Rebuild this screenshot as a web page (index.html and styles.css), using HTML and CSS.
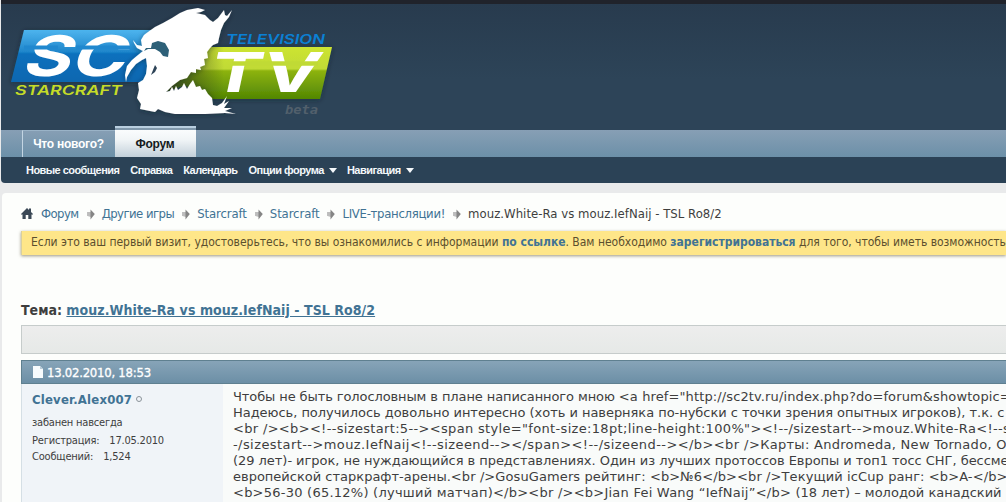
FILE: index.html
```html
<!DOCTYPE html>
<html lang="ru">
<head>
  <meta charset="UTF-8" />
  <title>mouz.White-Ra vs mouz.IefNaij - TSL Ro8/2</title>
  <link rel="stylesheet" href="styles.css">
</head>
<body>

  <!-- Header -->
  <div class="header">
    <a href="#" class="logo">
      <svg width="340" height="124" viewBox="0 0 340 124" role="img" aria-label="SC2TV">
        <defs>
          <linearGradient id="blue" x1="0" y1="0" x2="0" y2="1">
            <stop offset="0" stop-color="#4db4ee" />
            <stop offset="0.42" stop-color="#1f86cb" />
            <stop offset="0.46" stop-color="#0b70bd" />
            <stop offset="1" stop-color="#1067b0" />
          </linearGradient>
          <linearGradient id="green" x1="0" y1="0" x2="0" y2="1">
            <stop offset="0" stop-color="#cde432" />
            <stop offset="0.42" stop-color="#c0da35" />
            <stop offset="0.46" stop-color="#8db310" />
            <stop offset="1" stop-color="#528703" />
          </linearGradient>
          <linearGradient id="shade" x1="0" y1="0" x2="1" y2="0">
            <stop offset="0" stop-color="#27331b" stop-opacity="0.8" />
            <stop offset="1" stop-color="#27331b" stop-opacity="0" />
          </linearGradient>
          <filter id="glow" x="-10%" y="-10%" width="120%" height="125%">
            <feDropShadow dx="0" dy="1" stdDeviation="2.5" flood-color="#101c28" flood-opacity="0.5" />
          </filter>
        </defs>
        <path d="M24 30H160L150 82H11Z" fill="url(#blue)" filter="url(#glow)" />
        <path d="M206 47H332L320 99H204L185 85L165 92L180 74Z" fill="url(#green)" filter="url(#glow)" />
        <path d="M206 47H224V99H204L185 85L165 92L180 74Z" fill="url(#shade)" />

        <text class="logo-sc" transform="translate(20 76) skewX(-20)" textLength="103" lengthAdjust="spacingAndGlyphs">SC</text>
        <path d="M24 47.500H58M76 47.500H130" stroke="#2088cf" stroke-width="4" />
        <text class="logo-tv" transform="translate(207 92) skewX(-12)" textLength="110" lengthAdjust="spacingAndGlyphs">TV</text>
        <path d="M232 63.500H318" stroke="#c0da35" stroke-width="4.500" />
        <text class="logo-name" x="15" y="95" fill="#c5dc28" textLength="107" lengthAdjust="spacingAndGlyphs">STARCRAFT</text>
        <text class="logo-name" x="226" y="44" fill="#0b80d4" textLength="99" lengthAdjust="spacingAndGlyphs">TELEVISION</text>
        <text class="logo-beta" x="285" y="114" textLength="33" lengthAdjust="spacingAndGlyphs">beta</text>

        <!-- hydralisk skull -->
        <path fill="#fff" filter="url(#glow)" d="M148 32L155 27L163 23L172 18L180 13L187 10L198 8L205 10L201 12L196 13L205 15L210 20L213 22L218 18L224 10L225 15L227 16L232 10L229 17L224 23L221 30L219 38L218 43L213 45L210 48L207 52L208 58L204 59L205 65L200 67L201 70L196 69L196 73L191 72L187 78L180 80L172 86L166 92L170 91L172 87L174 91L176 86L178 90L182 87L184 83L187 89L190 84L193 80L196 87L200 86L202 90L205 89L208 94L212 98L213 105L217 106L222 103L227 96L224 104L229 101L224 108L232 108L225 111L236 114L225 113L205 114H175L165 112L158 109L155 112L145 110L140 109L141 104L137 98L139 90L138 83L143 80L146 74L147 66L146 58L142 60L136 64L131 70L127 77L126 82L125 75L127 66L132 60L138 55L143 51L137 48L134 43L133 40L137 45L142 46L141 40L144 35Z" />
        <path fill="#2d6078" d="M151 48L152 43L158 41L165 43L169 50L168 57L163 56L160 52L155 49L148 49L144 51L146 48Z" />
        <path fill="#2d4357" d="M155 65L157 68L155 72L151 75L153 70Z" />
      </svg>
    </a>
  </div>

  <!-- Tabs -->
  <div class="navbar">
    <a href="#" class="tab">Что нового?</a>
    <a href="#" class="tab selected">Форум</a>
  </div>
  <div class="submenu">
    <a href="#">Новые сообщения</a>
    <a href="#">Справка</a>
    <a href="#">Календарь</a>
    <a href="#" class="popup">Опции форума</a>
    <a href="#" class="popup">Навигация</a>
  </div>

  <svg width="0" height="0" class="defs">
    <symbol id="arrow" viewBox="0 0 8 11">
      <path d="M0.500 3H3.500V0.500L7.800 5L3.500 10.500V7.500L0.500 7Z" fill="#858585" />
      <path d="M0.500 3H3.500V7H0.500Z" fill="#bdbdbd" />
    </symbol>
  </svg>

  <div class="body-wrapper">
    <div class="breadcrumb">
      <svg class="home" width="12" height="11" viewBox="0 0 12 11"><path d="M6 0L8 2V0.500H10V4L12 6V6.500H10.500V11H7.300V7H4.700V11H1.500V6.500H0V6Z" fill="#3b4856" /></svg>
      <a href="#" class="tight">Форум</a>
      <svg class="arrow"><use href="#arrow" /></svg>
      <a href="#" class="tight">Другие игры</a>
      <svg class="arrow"><use href="#arrow" /></svg>
      <a href="#">Starcraft</a>
      <svg class="arrow"><use href="#arrow" /></svg>
      <a href="#">Starcraft</a>
      <svg class="arrow"><use href="#arrow" /></svg>
      <a href="#" class="live">LIVE-трансляции!</a>
      <svg class="arrow"><use href="#arrow" /></svg>
      <span class="current">mouz.White-Ra vs mouz.IefNaij - TSL Ro8/2</span>
    </div>

    <div class="notice">Если это ваш первый визит, удостоверьтесь, что вы ознакомились с информации <a href="#">по ссылке</a>. Вам необходимо <a href="#">зарегистрироваться</a> для того, чтобы иметь возможность</div>

    <h1 class="thread-title">Тема: <a href="#">mouz.White-Ra vs mouz.IefNaij - TSL Ro8/2</a></h1>

    <div class="thread-controls"></div>

    <div class="post">
      <div class="post-head">
        <svg width="10" height="12" viewBox="0 0 10 12"><path d="M0 0H7L10 3V12H0Z" fill="#f7fbfd" /><path d="M7 0V3H10" fill="#b8cbd7" /></svg>
        <span>13.02.2010, 18:53</span>
      </div>
      <div class="post-body">
        <div class="user">
          <div class="user-name"><a href="#">Clever.Alex007</a><i class="offline"></i></div>
          <div class="user-title">забанен навсегда</div>
          <div class="user-stat"><span>Регистрация:</span><span>17.05.2010</span></div>
          <div class="user-stat"><span>Сообщений:</span><span>1,524</span></div>
        </div>
        <div class="content">
          <div><span class="ru">Чтобы не быть голословным в плане написанного мною </span><span class="link">&lt;a href="http://sc2tv.ru/index.php?do=forum&amp;showtopic=</span></div>
          <div class="ru-loose">Надеюсь, получилось довольно интересно (хоть и наверняка по-нубски с точки зрения опытных игроков), т.к. с</div>
          <div class="tags">&lt;br /&gt;&lt;b&gt;&lt;!--sizestart:5--&gt;&lt;span style="font-size:18pt;line-height:100%"&gt;&lt;!--/sizestart--&gt;mouz.White-Ra&lt;!--s</div>
          <div><span class="tags-wide">-/sizestart--&gt;mouz.IefNaij&lt;!--sizeend--&gt;&lt;/span&gt;&lt;!--/sizeend--&gt;&lt;/b&gt;&lt;br /&gt;</span><span class="maps">Карты: Andromeda, New Tornado, O</span></div>
          <div class="ru-loose">(29 лет)- игрок, не нуждающийся в представлениях. Один из лучших протоссов Европы и топ1 тосс СНГ, бессме</div>
          <div>европейской старкрафт-арены.<span class="rating">&lt;br /&gt;GosuGamers рейтинг: &lt;b&gt;№6&lt;/b&gt;&lt;br /&gt;Текущий icCup ранг: &lt;b&gt;A-&lt;/b&gt;</span></div>
          <div><span class="record">&lt;b&gt;56-30 (65.12%) (лучший матчап)&lt;/b&gt;&lt;br /&gt;&lt;b&gt;Jian Fei Wang “IefNaij”&lt;/b&gt; </span>(18 лет) – молодой канадский</div>
        </div>
      </div>
    </div>
  </div>

</body>
</html>
```
FILE: styles.css
```css
* {
  margin: 0;
  padding: 0;
  box-sizing: border-box;
}

html, body {
  width: 1006px;
  height: 502px;
  overflow: hidden;
}

body {
  background: #e9eaeb;
  color: #3e3e3e;
  font-family: 'DejaVu Sans Condensed', 'DejaVu Sans', Tahoma, sans-serif;
  font-size: 13px;
  padding-left: 1px;
}

a {
  color: #417394;
  text-decoration: none;
}

/* Header */
.header {
  height: 130px;
  background: linear-gradient(#283b4e, #2d4458 60%);
  border-top: 4px solid #20232b;
}

.logo svg {
  display: block;
  margin: -4px 0 0 -1px;
}

.logo text {
  font-family: Inter, 'DejaVu Sans', sans-serif;
  font-weight: bold;
}

.logo .logo-sc {
  font-size: 56px;
  fill: #fff;
}

.logo .logo-tv {
  font-size: 55px;
  fill: #fff;
}

.logo .logo-name {
  font-size: 13px;
  font-style: italic;
  font-weight: 600;
}

.logo .logo-beta {
  font-family: 'DejaVu Sans Mono', monospace;
  font-size: 13px;
  font-style: italic;
  fill: #52606c;
}

/* Tabs */
.navbar {
  display: flex;
  align-items: flex-end;
  height: 27px;
  padding-left: 21px;
  background: linear-gradient(#879fb5, #6c90a8);
  font-family: 'Liberation Sans', Arial, sans-serif;
  font-weight: bold;
  font-size: 12px;
  letter-spacing: -0.25px;
}

.tab {
  width: 93px;
  height: 27px;
  padding-right: 1px;
  line-height: 27px;
  text-align: center;
  color: #fff;
  border-left: 1px solid #c3d5e3;
  border-top: 1px solid #9ab3c7;
}

.tab.selected {
  width: 81px;
  height: 31px;
  line-height: 32px;
  color: #151a20;
  border-left: 0;
  border-top: 2px solid #b9cfe0;
  background: linear-gradient(#8199ac 0 2px, #fafcfd 2px, #f1f5f7 40%, #c3d0da);
}

.submenu {
  display: flex;
  height: 26px;
  padding-left: 25px;
  line-height: 26px;
  background: #2b4256;
  border-bottom-left-radius: 4px;
  font-family: 'Liberation Sans', Arial, sans-serif;
  font-weight: bold;
  font-size: 11px;
  letter-spacing: -0.55px;
}

.submenu a {
  color: #f4f8fb;
  margin-right: 11px;
  white-space: nowrap;
}

.submenu .popup {
  display: flex;
  align-items: center;
  margin-right: 10px;
  letter-spacing: -0.5px;
}

.submenu .popup::after {
  content: "";
  margin-left: 5px;
  border: 4px solid transparent;
  border-top: 5px solid #f4f8fb;
  border-bottom: 0;
}

.defs {
  display: block;
}

/* Page body */
.body-wrapper {
  height: 320px;
  margin: 10px 0 0 1px;
  padding: 11px 0 0 19px;
  background: #fdfefc;
  border-top-left-radius: 4px;
}

.breadcrumb {
  display: flex;
  align-items: center;
  height: 19px;
  white-space: nowrap;
}

.breadcrumb a {
  letter-spacing: -0.1px;
}

.breadcrumb .tight {
  letter-spacing: -0.55px;
}

.breadcrumb .live {
  letter-spacing: -0.3px;
}

.breadcrumb .current {
  letter-spacing: 0.03px;
}

.home {
  margin-right: 8px;
}

.arrow {
  width: 8px;
  height: 11px;
  margin: 2px 7px 0 8px;
}

.notice {
  height: 24px;
  margin-top: 8px;
  padding-left: 9px;
  line-height: 23px;
  background: #fee689;
  border-left: 1px solid #d8cf9f;
  box-shadow: 0 1px 3px rgba(90, 80, 50, 0.6);
  font-size: 12px;
  letter-spacing: -0.015px;
  color: #5b4f2e;
  white-space: pre;
}

.notice a {
  font-weight: bold;
}

.thread-title {
  height: 20px;
  margin-top: 45px;
  line-height: 20px;
  font-size: 14px;
  white-space: pre;
}

.thread-title a {
  letter-spacing: 0.06px;
  text-decoration: underline;
}

.thread-controls {
  height: 29px;
  margin-top: 5px;
  background: linear-gradient(#ededed, #e6e9e7);
  border: 1px solid #c6cccb;
  border-right: 0;
}

/* Post */
.post {
  margin-top: 6px;
  border-left: 1px solid #d5dfe5;
}

.post-head {
  display: flex;
  align-items: center;
  height: 24px;
  margin-left: -1px;
  padding-left: 11px;
  background: linear-gradient(#87a4b8, #6c8fa6);
  border: 1px solid #5f8090;
  border-right: 0;
  color: #fff;
}

.post-head span {
  margin-left: 4px;
  letter-spacing: -0.25px;
  -webkit-text-stroke: 0.3px #fff;
}

.post-body {
  display: flex;
  height: 118px;
}

.user {
  flex: none;
  width: 201px;
  padding: 6px 0 0 10px;
  background: #f0f4f8;
  font-size: 11px;
  letter-spacing: -0.2px;
}

.user-name {
  display: flex;
  align-items: center;
  height: 18px;
  font-size: 13px;
  font-weight: bold;
  letter-spacing: 0.2px;
}

.offline {
  width: 6px;
  height: 6px;
  margin-left: 4px;
  border: 1px solid #8a9299;
  border-radius: 50%;
}

.user-title {
  height: 18px;
  margin: 6px 0 1px;
  line-height: 18px;
}

.user-stat {
  display: flex;
  height: 16px;
  line-height: 16px;
}

.user-stat span + span {
  margin-left: 10px;
}

.content {
  display: flex;
  flex-direction: column;
  flex: 1;
  padding: 5px 0 0 10px;
  background: #f9fbfa;
  font-family: 'DejaVu Sans', Verdana, sans-serif;
  line-height: 16px;
  white-space: pre;
  overflow: hidden;
}

.content > div {
  height: 16px;
}

.ru {
  letter-spacing: -0.1px;
}

.ru-loose {
  letter-spacing: -0.04px;
}

.link {
  letter-spacing: 0.12px;
}

.tags {
  letter-spacing: 0.33px;
}

.tags-wide {
  letter-spacing: 0.42px;
}

.maps {
  letter-spacing: 0.28px;
}

.rating {
  letter-spacing: 0.1px;
}

.record {
  letter-spacing: 0.24px;
}
```
